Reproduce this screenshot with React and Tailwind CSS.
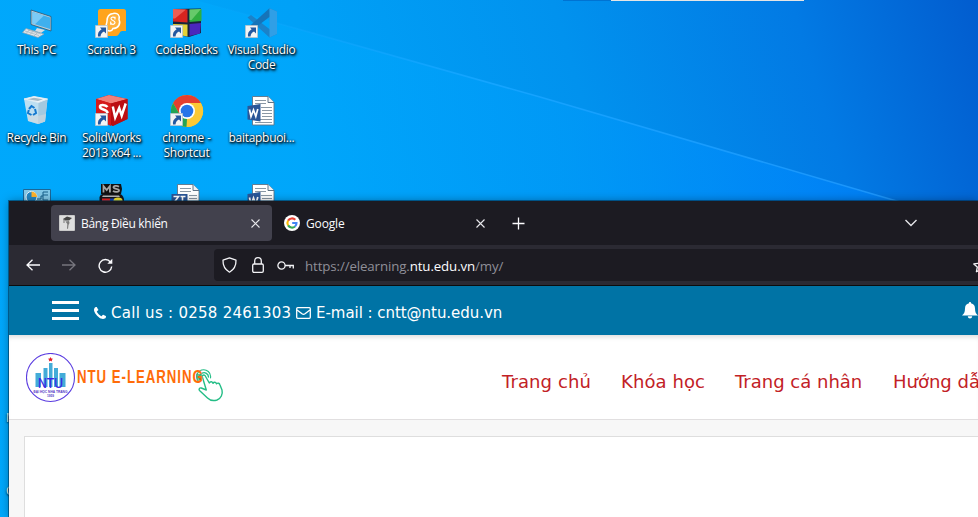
import React from "react";

const SYSTEM = "font-['Open_Sans','Noto_Sans',sans-serif]";
const WEB = "font-['DejaVu_Sans',sans-serif]";

function Wallpaper() {
  return (
    <svg className="absolute inset-0" width="978" height="517" viewBox="0 0 978 517">
      <defs>
        <linearGradient id="sky" gradientUnits="userSpaceOnUse" x1="60" y1="260" x2="1010" y2="-30">
          <stop offset="0" stopColor="#00a7fa" />
          <stop offset="0.3" stopColor="#00a1f7" />
          <stop offset="0.55" stopColor="#0192ee" />
          <stop offset="0.78" stopColor="#027ae4" />
          <stop offset="1" stopColor="#0256ca" />
        </linearGradient>
        <linearGradient id="beam" gradientUnits="userSpaceOnUse" x1="300" y1="200" x2="978" y2="130">
          <stop offset="0" stopColor="#00a8fc" />
          <stop offset="0.4" stopColor="#009af8" />
          <stop offset="0.75" stopColor="#0087fb" />
          <stop offset="1" stopColor="#0074f0" />
        </linearGradient>
        <linearGradient id="ray" gradientUnits="userSpaceOnUse" x1="200" y1="0" x2="900" y2="200">
          <stop offset="0" stopColor="#12a8ff" stopOpacity="0" />
          <stop offset="0.4" stopColor="#14a5ff" />
          <stop offset="1" stopColor="#1c94fb" />
        </linearGradient>
      </defs>
      <rect width="978" height="517" fill="url(#sky)" />
      <path d="M195 0L540 97L900 202V517H0V0Z" fill="url(#beam)" opacity=".75" />
      <path d="M195 0L540 97L900 202" stroke="url(#ray)" strokeWidth="1.6" fill="none" />
      <rect x="563" width="48" height="1" fill="#0073d2" />
      <rect x="611" width="193" height="1" fill="#e5e5e5" />
    </svg>
  );
}

function ShortcutBadge() {
  return (
    <g>
      <path d="M0.5 19.5h12v12h-12z" fill="#f4f4f4" stroke="#b9c4cc" strokeWidth=".8" />
      <path d="M5 21.5h6v6l-2-2c-2 1-3 2-3.5 5H3c-.5-3 .8-5.500 3.600-7.200z" fill="#2458a0" />
    </g>
  );
}

const ThisPc = () => (
  <svg width="34" height="34" viewBox="0 0 34 34">
    <path d="M11 4L31 10.500V25L11 18.500Z" fill="#b9cdd9" stroke="#30566f" strokeWidth=".8" />
    <path d="M12.500 6L30 11.500V23L12.500 17.500Z" fill="#3fb0ee" />
    <path d="M12.500 6L24 9.500L15 18.300L12.500 17.500Z" fill="#7bcbf6" />
    <path d="M17 22l8 2-4 3-6-2z" fill="#d8dee3" />
    <path d="M6 22.500L24 28l-6 3.500L2.500 26.500Z" fill="#dfe5e9" stroke="#8ba0ad" strokeWidth=".7" />
    <path d="M5 25l14 4.500M8 24l13 4M10 23.500l-4 4M14 24.500l-4 4M18 26l-4 4" stroke="#99a9b3" strokeWidth=".6" />
  </svg>
);

const Scratch = () => (
  <svg width="34" height="34" viewBox="0 0 34 34">
    <path d="M5.500 3H28.500Q31 3 31 5.500V25h-4q-2 0-3 3-1 2-3 2H5.500Q3 30 3 27.500V5.500Q3 3 5.500 3Z" fill="#ffa41c" />
    <path d="M18 7.500c5-1 7 2 6 6 2 4-.500 9-6 9-1 3-5 3.500-7 .5-1-3 1-5 1-8 0-4 2-7 6-7.500Z" fill="#ffb13a" stroke="#fff" strokeWidth="1.500" />
    <path d="M20 12c-1.200-1.500-4-1.200-4 .6 0 2.300 4 1.600 4 4 0 2-3.200 2.400-4.300.4M20 10.800v2.700M15.700 15.500v3.200" stroke="#fff" strokeWidth="1.200" fill="none" />
    <ShortcutBadge />
  </svg>
);

const CodeBlocks = () => (
  <svg width="34" height="34" viewBox="0 0 34 34">
    <path d="M3 3L31 2.500 31 27 19 31 3 28z" fill="#17243a" />
    <path d="M3 3l14.500 .5V16.500L3 15.500z" fill="#d72420" />
    <path d="M19.500 3.500L31.500 3v12l-12 1z" fill="#2fae3f" />
    <path d="M3 18l14.500.5v12L4 28z" fill="#e4d237" />
    <path d="M19.500 18l11.500-1-1 10.500-10.500 2.500z" fill="#4b27bd" />
    <path d="M3 3l13 .5-11 9H3z" fill="#f07167" opacity=".75" />
    <path d="M19.500 3.500L31 3 21.500 14h-2z" fill="#7ed67e" opacity=".7" />
    <ShortcutBadge />
  </svg>
);

const VsCode = () => (
  <svg width="34" height="34" viewBox="0 0 34 34">
    <path d="M24.500 2.200L32 5.500V28L24.500 31.500 2.500 11.500 6 9 25 23.500Z" fill="#1b82c9" />
    <path d="M24.500 2.200L2.500 22 6 25 25 10.500Z" fill="#1674b9" />
    <path d="M24.500 2.200L32 5.500V28l-7.500 3.500z" fill="#309fe6" />
    <ShortcutBadge />
  </svg>
);

const RecycleBin = () => (
  <svg width="34" height="34" viewBox="0 0 34 34">
    <path d="M4 5L14 2.500 27.500 5 25 27.500 18 30 8 27Z" fill="#bcdff2" />
    <path d="M18.500 8.500L27.500 5 25 27.500 18 30Z" fill="#a4c9e0" />
    <path d="M4 5L14 2.500 27.500 5 18.500 8.500Z" fill="#eef5fa" stroke="#ddebf3" />
    <path d="M7.500 5.200l6.500-1.500 9 1.500-5 1.800z" fill="#a5b9c6" />
    <path d="M8 20l9.500 2 8.500-2-1 7.500-7 2.500-10-3z" fill="#d2d8dc" opacity=".6" />
    <path d="M9 15l2.500-3 3 2M15 15l1 4-3 2M11.500 21L8 19l.8-3" stroke="#1479cf" strokeWidth="2" fill="none" />
  </svg>
);

const SolidWorks = () => (
  <svg width="34" height="34" viewBox="0 0 34 34">
    <path d="M1 5L14 1l18.500 4v20L18 32 1 25Z" fill="#b90c0e" />
    <path d="M1 5L14 1l18.500 4L16 9.500Z" fill="#f28079" />
    <path d="M1 5l15 4.500V32L1 25z" fill="#d6191a" />
    <path d="M16 9.500L32.500 5v20L17 32z" fill="#bb0e12" />
    <path d="M12.500 13c-2-2.500-8-3-7.500 0 .500 3 7.500 2 7.500 6" stroke="#fff" strokeWidth="2.600" fill="none" />
    <path d="M17.800 12.500l2.400 11 4-9.500 2.500 7.500 4-12" stroke="#fff" strokeWidth="2.500" fill="none" />
    <ShortcutBadge />
  </svg>
);

const Chrome = () => (
  <svg width="34" height="34" viewBox="0 0 34 34">
    <circle cx="17" cy="17" r="16" fill="#fbc31c" />
    <path d="M3.100 9A16 16 0 0 1 30.900 9H17L10 21Z" fill="#e43e30" />
    <path d="M3.100 9A16 16 0 0 0 17 33L24 21 10 21Z" fill="#23a455" />
    <path d="M30.900 9H17v16l-.5 8A16 16 0 0 0 30.900 9Z" fill="#fcc934" />
    <circle cx="17" cy="17" r="8" fill="#fff" />
    <circle cx="17" cy="17" r="6.300" fill="#2674e8" />
    <ShortcutBadge />
  </svg>
);

const WordDoc = () => (
  <svg width="34" height="34" viewBox="0 0 34 34">
    <path d="M7.500 2.500h15.500l6 6v22.500h-21.500z" fill="#fff" stroke="#617487" strokeWidth=".9" />
    <path d="M23 2.500v6h6" fill="#eef1f4" stroke="#617487" />
    <path d="M10 6.500h11M10 9.500h11M16 13.500h11M17 16.500h10M17 19.500h10M17 22.500h10M10 25.500h17M10 28.500h17" stroke="#8a98a5" />
    <path d="M2.500 12L15.500 10v17.500l-13-2z" fill="#2a5698" />
    <path d="M4.500 15.500l1.500 7 2.500-6.500 2.300 6.500 2-7.500" stroke="#fff" strokeWidth="1.700" fill="none" />
  </svg>
);

const ArchiveDoc = () => (
  <svg width="34" height="34" viewBox="0 0 34 34">
    <path d="M7.500 2.500h15.500l6 6v22.500h-21.500z" fill="#fff" stroke="#617487" strokeWidth=".9" />
    <path d="M23 2.500v6h6" fill="#eef1f4" stroke="#617487" />
    <path d="M10 6.500h11M10 9.500h11M19 13.500h8M19 16.500h8" stroke="#8a98a5" />
    <path d="M1.500 12H17.500v16h-16z" fill="#2a5698" />
    <path d="M3.500 14.500h5L4.500 20M10.500 14.500h5M12.500 14.500v5" stroke="#fff" strokeWidth="1.600" fill="none" />
  </svg>
);

const ControlPanel = () => (
  <svg width="34" height="34" viewBox="0 0 34 34">
    <path d="M3.500 7.500h27v25h-27z" fill="#83c8e8" stroke="#1b6797" />
    <circle cx="11.500" cy="15" r="5.500" fill="#2387c4" stroke="#e5f4fb" />
    <path d="M11.500 15V9.500A5.500 5.500 0 0 1 17 15z" fill="#ffb42c" />
    <path d="M17 17h4v-3h2M28 10h-5v3h5M23 13v5h5" stroke="#17618c" fill="none" />
  </svg>
);

const MsDos = () => (
  <svg width="34" height="34" viewBox="0 0 34 34">
    <path d="M6 2h20l1 5-1 5H6z" fill="#111" />
    <path d="M8.500 10.500V4l3.200 4 3.200-4v6.500M24 4.800c-2-1.500-6-1-5.500.8.500 1.700 5 .8 5.500 2.500.500 2-4 2.500-6 .8" stroke="#a5a5a5" strokeWidth="1.800" fill="none" />
    <path d="M4.500 15q1-3 3-3h17q3 0 4.500 5v8H4.500z" fill="#15151a" />
    <path d="M8 13.500h16l1 1.500H7z" fill="#b8b8b8" />
    <path d="M7 16.500h8v6H7z" fill="#ee2424" />
    <path d="M15 16.500h5v6h-5z" fill="#1746c5" />
    <ellipse cx="23" cy="18.500" rx="4.500" ry="3" fill="#f7e52c" />
  </svg>
);

const DESKTOP_ITEMS = [
  { Icon: ThisPc, lines: ["This PC"], track: "tracking-[-0.2px]" },
  { Icon: Scratch, lines: ["Scratch 3"], track: "tracking-[-0.3px]" },
  { Icon: CodeBlocks, lines: ["CodeBlocks"], track: "tracking-[-0.2px]" },
  { Icon: VsCode, lines: ["Visual Studio", "Code"], track: "tracking-[-0.3px]" },
  { Icon: RecycleBin, lines: ["Recycle Bin"], track: "tracking-[-0.25px]" },
  { Icon: SolidWorks, lines: ["SolidWorks", "2013 x64 ..."], track: "tracking-[-0.35px]" },
  { Icon: Chrome, lines: ["chrome -", "Shortcut"], track: "tracking-[-0.2px]" },
  { Icon: WordDoc, lines: ["baitapbuoi..."], track: "tracking-[-0.3px]" },
  { Icon: ControlPanel, lines: [], track: "" },
  { Icon: MsDos, lines: [], track: "" },
  { Icon: ArchiveDoc, lines: [], track: "" },
  { Icon: WordDoc, lines: [], track: "" },
];

function Desktop() {
  return (
    <div className="relative -ml-px grid w-[300px] grid-cols-[repeat(4,75px)] auto-rows-[88px] pt-[6px]">
      {DESKTOP_ITEMS.map(({ Icon, lines, track }, i) => (
        <div key={i} className="flex flex-col items-center">
          <Icon />
          <div className={`mt-[2px] whitespace-nowrap text-center text-[12px] leading-[15px] text-white [text-shadow:0_0_2px_#001c33,1px_1px_2px_#000,1px_2px_3px_rgba(0,0,0,.8)] ${SYSTEM} ${track}`}>
            {lines.map((l) => (
              <div key={l}>{l}</div>
            ))}
          </div>
        </div>
      ))}
    </div>
  );
}

const Close = () => (
  <svg width="9" height="9" viewBox="0 0 9 9" stroke="#e8e8ec" strokeWidth="1.100">
    <path d="M.5.5l8 8M8.500.5l-8 8" />
  </svg>
);

function TabStrip() {
  return (
    <div className={`flex h-[44px] items-center bg-[#1c1b22] pl-[42px] text-[12px] text-[#fbfbfe] ${SYSTEM}`}>
      <div className="flex h-[36px] w-[221px] items-center rounded-[4px] bg-[#42414d] pl-[8px] pr-[12px]">
        <svg width="16" height="16" viewBox="0 0 16 16">
          <rect width="16" height="16" rx="1" fill="#c9c9c9" />
          <rect x="1" y="1" width="14" height="14" fill="#dedede" />
          <path d="M4 4l4-2.500 5 1.500-3 2.500H6z" fill="#444" />
          <path d="M6.500 6.500l3.500-.5.5 2-1 2-.5 4-1-.5.300-4.500z" fill="#7c7c7c" />
          <path d="M5 4v4" stroke="#777" />
        </svg>
        <span className="ml-[6px] flex-1 whitespace-nowrap pt-px tracking-[-0.3px]">Bảng Điều khiển</span>
        <Close />
      </div>
      <div className="flex h-[36px] w-[222px] items-center pl-[12px] pr-[9px]">
        <svg width="16" height="16" viewBox="0 0 16 16" fill="none">
          <circle cx="8" cy="8" r="8" fill="#fff" />
          <g strokeWidth="2.100">
            <path d="M4.100 5.600A4.600 4.600 0 0 1 11.300 4.800" stroke="#ea4335" />
            <path d="M4.100 10.400A4.600 4.600 0 0 1 4.100 5.600" stroke="#fbbc05" />
            <path d="M4.100 10.400A4.600 4.600 0 0 0 11 11.500" stroke="#34a853" />
            <path d="M11 11.500A4.600 4.600 0 0 0 12.500 8H8.200" stroke="#4285f4" />
          </g>
        </svg>
        <span className="ml-[6px] flex-1 pt-px tracking-[-0.15px]">Google</span>
        <Close />
      </div>
      <svg className="ml-[18px]" width="13" height="13" viewBox="0 0 13 13" stroke="#fbfbfe" strokeWidth="1.300">
        <path d="M6.500.5v12M.5 6.500h12" />
      </svg>
      <svg className="ml-[379px]" width="14" height="8" viewBox="0 0 14 8" fill="none" stroke="#e4e4e8" strokeWidth="1.400">
        <path d="M1.500 1l5.500 5.500 5.500-5.500" />
      </svg>
    </div>
  );
}

function Toolbar() {
  return (
    <div className={`flex h-[41px] items-center border-b border-[#0c0c0d] bg-[#2b2a33] pl-[17px] ${SYSTEM}`}>
      <svg width="14" height="12" viewBox="0 0 14 12" fill="none" stroke="#fbfbfe" strokeWidth="1.300">
        <path d="M14 6H1M6.500.7L1 6l5.500 5.300" />
      </svg>
      <svg className="ml-[22px]" width="14" height="12" viewBox="0 0 14 12" fill="none" stroke="#77767e" strokeWidth="1.300">
        <path d="M0 6h13M7.500.7L13 6l-5.500 5.300" />
      </svg>
      <svg className="ml-[22px]" width="15" height="15" viewBox="0 0 15 15" fill="none" stroke="#fbfbfe" strokeWidth="1.400">
        <path d="M12.400 4A6.300 6.300 0 1 0 13.700 8.500" />
        <path d="M14.300.8v5h-5z" fill="#fbfbfe" stroke="none" />
      </svg>
      <div className="ml-[101px] flex h-[32px] flex-1 items-center overflow-hidden rounded-l-[4px] bg-[#1c1b22] pl-[8px]">
        <svg className="shrink-0" width="15" height="16" viewBox="0 0 15 16" fill="none" stroke="#f3f3f6" strokeWidth="1.300">
          <path d="M7.500.8L14 3.200c.2 5-1.500 9-6.500 12C2.500 12.200.8 8.200 1 3.200Z" strokeLinejoin="round" />
        </svg>
        <svg className="ml-[15px] shrink-0" width="12" height="16" viewBox="0 0 12 16" fill="none" stroke="#f3f3f6" strokeWidth="1.300">
          <rect x=".7" y="7" width="10.600" height="8.300" rx="1.300" />
          <path d="M2.700 7V4a3.300 3.300 0 0 1 6.600 0v3" />
        </svg>
        <svg className="ml-[13px] shrink-0" width="17" height="9" viewBox="0 0 17 9" fill="none" stroke="#f3f3f6" strokeWidth="1.300">
          <circle cx="4.500" cy="4.500" r="3.600" />
          <path d="M8 4.500h8.300v3M13 4.500v2.500" />
        </svg>
        <div className="ml-[11px] mt-[2px] whitespace-nowrap text-[13.3px] leading-[18px] tracking-[-0.12px] text-[#8f8f98]">
          https://elearning.<span className="text-[#fbfbfe]">ntu.edu.vn</span>/my/
        </div>
        <svg className="ml-auto shrink-0 -mr-[10px]" width="15" height="15" viewBox="0 0 15 15" fill="none" stroke="#f3f3f6" strokeWidth="1.300">
          <path d="M7.500 1l2 4.300 4.700.6-3.500 3.200.9 4.700-4.100-2.300-4.100 2.300.9-4.700L.8 5.900l4.700-.6z" strokeLinejoin="round" />
        </svg>
      </div>
    </div>
  );
}

function ContactBar() {
  return (
    <div className={`relative flex h-[49px] items-center overflow-hidden bg-[#0073a5] pl-[43px] text-[15px] text-white ${WEB}`}>
      <div className="flex w-[27px] flex-col gap-[5px]">
        <span className="h-[3px] bg-white" />
        <span className="h-[3px] bg-white" />
        <span className="h-[3px] bg-white" />
      </div>
      <svg className="ml-[15px] mt-[4px] shrink-0" width="12" height="12" viewBox="0 0 1408 1408" fill="#fff">
        <path d="M1408 1112q0 27-10 70.5t-21 68.5q-21 50-122 106-94 51-186 51-27 0-53-3.500t-57.500-12.500-47-14.500-55.500-20.500-49-18q-98-35-175-83-127-79-264-216t-216-264q-48-77-83-175-3-9-18-49t-20.500-55.500-14.500-47-12.500-57.500-3.500-53q0-92 51-186 56-101 106-122 25-11 68.500-21t70.500-10q14 0 21 3 18 6 53 76 11 19 30 54t35 63.500 31 53.500q3 4 17.500 25t21.500 35.500 7 28.500q0 20-28.500 50t-62 55-62 53-28.500 46q0 9 5 22.500t8.500 20.500 14 24 11.500 19q76 137 174 235t235 174q2 1 19 11.500t24 14 20.500 8.500 22.500 5q18 0 46-28.500t53-62 55-62 50-28.500q14 0 28.500 7t35.500 21.500 25 17.500q25 15 53.500 31t63.500 35 54 30q70 35 76 53 3 7 3 21z" />
      </svg>
      <span className="ml-[5px] mt-[5px] w-[180px] whitespace-nowrap tracking-[0.27px]">Call us : 0258 2461303</span>
      <svg className="ml-[5px] mt-[4px] shrink-0" width="15" height="12" viewBox="0 0 15 12" fill="none" stroke="#fff" strokeWidth="1.300">
        <rect x=".7" y=".7" width="13.600" height="10.600" rx="1" />
        <path d="M1 3c2 1.500 3.500 2.500 5 3.800 1 .7 2 .7 3 0C10.500 5.500 12 4.500 14 3" />
      </svg>
      <span className="ml-[5px] mt-[5px] whitespace-nowrap tracking-[-0.04px]">E-mail : cntt@ntu.edu.vn</span>
      <svg className="ml-auto mt-[-1px] shrink-0" width="16" height="17" viewBox="0 0 16 17" fill="#fff">
        <path d="M8 0c.8 0 1.200.6 1 1.300 2.700.6 4 2.500 4 5.200 0 4 1.200 5.500 3 7H0c1.800-1.500 3-3 3-7 0-2.700 1.300-4.600 4-5.200C6.800.6 7.200 0 8 0zM5.800 14.200h4.400c-.2 1.300-1 2.300-2.200 2.300s-2-1-2.200-2.300z" />
      </svg>
    </div>
  );
}

function Seal() {
  return (
    <svg width="50" height="50" viewBox="0 0 50 50">
      <circle cx="24.500" cy="24.500" r="24" fill="#fff" stroke="#5a3ce0" strokeWidth="1.100" />
      <path d="M9.500 20h5.500v14h-5.500zM17.500 15h4v19h-4zM23 10h3.500v24H23zM28 15h4v19h-4zM33.500 20h6v14h-6z" fill="#43acd8" />
      <path d="M24.500 4l.8 1.500 1.700.2-1.200 1.200.3 1.700-1.600-.8-1.600.8.3-1.700-1.200-1.200 1.700-.2z" fill="#e51f28" />
      <text x="24.500" y="34.500" textAnchor="middle" textLength="25" lengthAdjust="spacingAndGlyphs" fontFamily="Liberation Sans, Arial, sans-serif" fontSize="14" fill="#3a22e4" stroke="#3a22e4" strokeWidth=".2">NTU</text>
      <text x="24.500" y="39.500" textAnchor="middle" textLength="34" lengthAdjust="spacingAndGlyphs" fontFamily="Liberation Sans, Arial, sans-serif" fontWeight="bold" fontSize="3.600" fill="#5438c5">ĐẠI HỌC NHA TRANG</text>
      <text x="24.500" y="43.800" textAnchor="middle" textLength="7" fontFamily="Liberation Sans, Arial, sans-serif" fontWeight="bold" fontSize="3.200" fill="#5438c5">1959</text>
    </svg>
  );
}

function SiteHeader() {
  return (
    <div className="flex h-[85px] border-b border-[#e1dfe0] bg-white pl-[17px] shadow-[inset_0_5px_5px_-3px_rgba(0,0,0,0.14)]">
      <div className="flex w-[476px] shrink-0 items-start pt-[18px]">
        <Seal />
        <div className="mt-[13px] w-[125px] whitespace-nowrap pl-px font-['Liberation_Sans',Arial,sans-serif] text-[18.5px] font-bold leading-[22px] text-[#ff6c0a]">
          <div className="w-max origin-left scale-x-[0.715] tracking-[1.35px]">NTU E-LEARNING</div>
        </div>
        <svg className="-ml-[7px] mt-[16px]" width="31" height="34" viewBox="0 0 31 34" fill="none" stroke="#24bd86" strokeWidth="1.400" strokeLinecap="round" strokeLinejoin="round">
          <path d="M8.500 8.500c-1-1.500.8-3.500 2.500-2l4.300 7.500c1-2 3.200-1.500 3.700.3 1-1.700 3-1.200 3.500.5 1.500-1.400 3-.5 3.500 1.200l2 5c1 4-1 8.500-5 10-4 1.200-7 .5-9.500-2l-8-7.500c-1-1.300 0-3 1.800-2.500l5 2z" />
          <path d="M7 11.500A4.500 4.500 0 1 1 14.500 8" />
          <path d="M4.500 12.500A7 7 0 1 1 16.500 9" strokeWidth="1.100" />
          <path d="M2 4.500l6 1v6l-5-1z" fill="#4a9d62" stroke="none" opacity=".75" />
        </svg>
      </div>
      <nav className={`flex gap-[30px] whitespace-nowrap pt-[35px] text-[18px] leading-[24px] text-[#c22126] ${WEB}`}>
        <span className="w-[89px] tracking-[0.1px]">Trang chủ</span>
        <span className="w-[84px] tracking-[0.1px]">Khóa học</span>
        <span className="w-[128px] tracking-[0px]">Trang cá nhân</span>
        <span className="tracking-[0px]">Hướng dẫn</span>
      </nav>
    </div>
  );
}

export default function App() {
  return (
    <div className="relative h-[517px] w-[978px] overflow-hidden">
      <Wallpaper />
      <Desktop />
      <div className={`absolute left-[6px] top-[410px] text-[12px] leading-[15px] text-white [text-shadow:0_1px_2px_#000] ${SYSTEM}`}>M</div>
      <div className={`absolute left-[6px] top-[483px] text-[12px] leading-[15px] text-white [text-shadow:0_1px_2px_#000] ${SYSTEM}`}>C</div>
      <div className="absolute left-[9px] top-[201px] flex h-[316px] w-[969px] flex-col overflow-hidden shadow-[0_0_0_1px_rgba(0,45,75,0.55),0_0_9px_rgba(0,0,0,0.35)]">
        <TabStrip />
        <Toolbar />
        <ContactBar />
        <SiteHeader />
        <div className="flex flex-1 bg-[#f7f7f7] pl-[15px] pt-[16px]">
          <div className="flex-1 border-l border-t border-[#dedede] bg-white" />
        </div>
      </div>
    </div>
  );
}
